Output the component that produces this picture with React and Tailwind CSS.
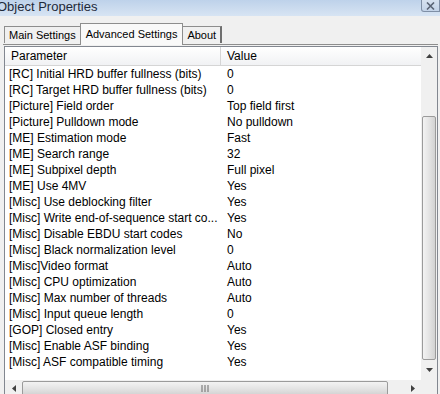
import React from "react";

const rows = [
  ["[RC] Initial HRD buffer fullness (bits)", "0"],
  ["[RC] Target HRD buffer fullness (bits)", "0"],
  ["[Picture] Field order", "Top field first"],
  ["[Picture] Pulldown mode", "No pulldown"],
  ["[ME] Estimation mode", "Fast"],
  ["[ME] Search range", "32"],
  ["[ME] Subpixel depth", "Full pixel"],
  ["[ME] Use 4MV", "Yes"],
  ["[Misc] Use deblocking filter", "Yes"],
  ["[Misc] Write end-of-sequence start co...", "Yes"],
  ["[Misc] Disable EBDU start codes", "No"],
  ["[Misc] Black normalization level", "0"],
  ["[Misc]Video format", "Auto"],
  ["[Misc] CPU optimization", "Auto"],
  ["[Misc] Max number of threads", "Auto"],
  ["[Misc] Input queue length", "0"],
  ["[GOP] Closed entry", "Yes"],
  ["[Misc] Enable ASF binding", "Yes"],
  ["[Misc] ASF compatible timing", "Yes"],
];

function Arrow({ dir }) {
  const pts = {
    up: "0,4 3.5,0 7,4",
    down: "0,0 3.5,4 7,0",
    left: "4,0 0,3.5 4,7",
    right: "0,0 4,3.5 0,7",
  }[dir];
  const w = dir === "up" || dir === "down" ? 7 : 4;
  const h = dir === "up" || dir === "down" ? 4 : 7;
  return (
    <svg width={w} height={h} viewBox={`0 0 ${w} ${h}`}>
      <polygon points={pts} fill="#404040" />
    </svg>
  );
}

export default function App() {
  return (
    <div
      className="w-[440px] h-[394px] bg-[#f0f0f0] overflow-hidden flex flex-col text-[12px] text-[#000]"
      style={{ fontFamily: '"Liberation Sans", Arial, sans-serif' }}
    >
      {/* Title bar */}
      <div className="h-[16px] shrink-0 flex items-start justify-between bg-gradient-to-b from-[#bed2ea] to-[#d7e4f3]">
        <div className="-ml-[3px] text-[13px] text-[#1e2a3a] leading-[14px]">Object Properties</div>
        <div className="w-[19px] h-[12px] border border-[#7f8fa6] border-t-0 rounded-bl-[3px] bg-gradient-to-b from-[#d6e1ef] to-[#c3d3e8] flex items-center justify-center">
          <svg width="9" height="8" viewBox="0 0 9 8">
            <path d="M1 0.5 L8 7.5 M8 0.5 L1 7.5" stroke="#5a6474" strokeWidth="1.6" />
          </svg>
        </div>
      </div>

      {/* Tabs */}
      <div className="h-[28px] shrink-0 flex items-end pl-[4px] relative text-[11px]">
        <div className="h-[17px] mb-[1px] px-[4px] border border-b-0 border-[#8d8d8d] bg-[#f0f0f0] leading-[16px]">Main Settings</div>
        <div className="h-[22px] -mb-[1px] px-[5px] border border-b-0 border-[#8d8d8d] bg-[#f9f9f9] leading-[20px] relative z-10 -ml-[1px]">Advanced Settings</div>
        <div className="h-[17px] mb-[1px] px-[4px] border border-b-0 border-[#8d8d8d] border-r-[2px] border-r-[#6f6f6f] bg-[#f0f0f0] leading-[16px] -ml-[1px]">About</div>
      </div>

      {/* Panel */}
      <div className="ml-[3px] w-[435px] border-t border-[#8d8d8d] pt-[1px] pl-[1px]">
        <div className="w-[434px] h-[352px] border border-[#828790] bg-white flex flex-col">
          <div className="flex flex-1 min-h-0">
            <div className="flex-1 flex flex-col overflow-hidden">
              {/* Header */}
              <div className="h-[19px] shrink-0 flex border-b border-[#d5d5d5] bg-gradient-to-b from-[#ffffff] to-[#f1f2f4] leading-[18px]">
                <div className="w-[216px] pl-[6px] border-r border-[#d5d5d5]">Parameter</div>
                <div className="pl-[6px]">Value</div>
              </div>
              {rows.map(([p, v]) => (
                <div key={p} className="h-[16px] shrink-0 flex leading-[16px] whitespace-nowrap">
                  <div className="w-[216px] pl-[4px] overflow-hidden">{p}</div>
                  <div className="pl-[6px]">{v}</div>
                </div>
              ))}
            </div>
            {/* Vertical scrollbar */}
            <div className="w-[16px] shrink-0 flex flex-col bg-[#f0f0f0]">
              <div className="h-[17px] flex items-center justify-center">
                <Arrow dir="up" />
              </div>
              <div className="h-[52px]" />
              <div className="h-[244px] mx-[1px] border border-[#9b9b9b] rounded-[2px] bg-gradient-to-r from-[#f3f3f3] via-[#e4e4e4] to-[#d2d2d2]" />
              <div className="flex-1 flex items-center justify-center">
                <Arrow dir="down" />
              </div>
            </div>
          </div>
          {/* Horizontal scrollbar */}
          <div className="h-[17px] shrink-0 flex bg-[#f0f0f0]">
            <div className="w-[17px] flex items-center justify-center">
              <Arrow dir="left" />
            </div>
            <div className="w-[366px] my-[1px] border border-[#9b9b9b] rounded-[2px] bg-gradient-to-b from-[#f3f3f3] via-[#e4e4e4] to-[#d2d2d2] flex items-center justify-center">
              <svg width="8" height="7" viewBox="0 0 8 7">
                <path d="M1 0 V7 M4 0 V7 M7 0 V7" stroke="#6a6a6a" strokeWidth="1" />
              </svg>
            </div>
            <div className="w-[17px]" />
            <div className="w-[16px] flex items-center justify-center">
              <Arrow dir="right" />
            </div>
            <div className="flex-1 bg-[#f0f0f0]" />
          </div>
        </div>
      </div>
    </div>
  );
}
